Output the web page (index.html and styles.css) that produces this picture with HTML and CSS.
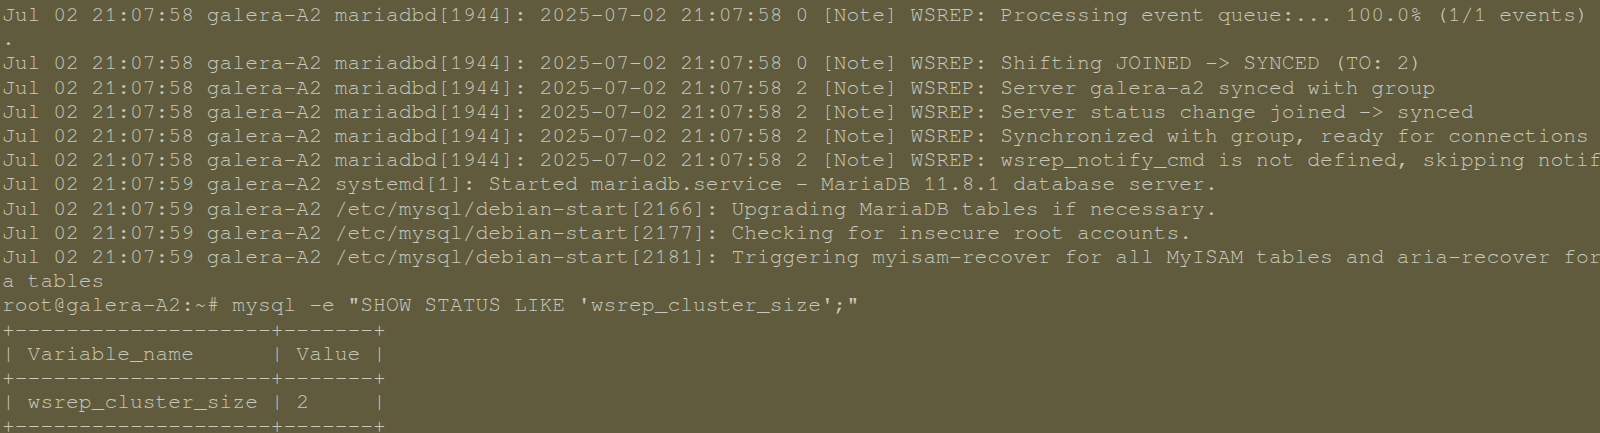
FILE: index.html
```html
<!DOCTYPE html>
<html lang="en">
<head>
<meta charset="utf-8">
<title>Terminal</title>
<link rel="stylesheet" href="styles.css">
</head>
<body>
<main class="terminal">
<pre class="output">Jul 02 21:07:58 galera-A2 mariadbd[1944]: 2025-07-02 21:07:58 0 [Note] WSREP: Processing event queue:... 100.0% (1/1 events) complete
.
Jul 02 21:07:58 galera-A2 mariadbd[1944]: 2025-07-02 21:07:58 0 [Note] WSREP: Shifting JOINED -&gt; SYNCED (TO: 2)
Jul 02 21:07:58 galera-A2 mariadbd[1944]: 2025-07-02 21:07:58 2 [Note] WSREP: Server galera-a2 synced with group
Jul 02 21:07:58 galera-A2 mariadbd[1944]: 2025-07-02 21:07:58 2 [Note] WSREP: Server status change joined -&gt; synced
Jul 02 21:07:58 galera-A2 mariadbd[1944]: 2025-07-02 21:07:58 2 [Note] WSREP: Synchronized with group, ready for connections
Jul 02 21:07:58 galera-A2 mariadbd[1944]: 2025-07-02 21:07:58 2 [Note] WSREP: wsrep_notify_cmd is not defined, skipping notification.
Jul 02 21:07:59 galera-A2 systemd[1]: Started mariadb.service - MariaDB 11.8.1 database server.
Jul 02 21:07:59 galera-A2 /etc/mysql/debian-start[2166]: Upgrading MariaDB tables if necessary.
Jul 02 21:07:59 galera-A2 /etc/mysql/debian-start[2177]: Checking for insecure root accounts.
Jul 02 21:07:59 galera-A2 /etc/mysql/debian-start[2181]: Triggering myisam-recover for all MyISAM tables and aria-recover for all Ari
a tables
root@galera-A2:~# mysql -e "SHOW STATUS LIKE 'wsrep_cluster_size';"
+--------------------+-------+
| Variable_name      | Value |
+--------------------+-------+
| wsrep_cluster_size | 2     |
+--------------------+-------+</pre>
</main>
</body>
</html>
```

FILE: styles.css
```css
html, body {
  margin: 0;
  padding: 0;
  background: #5f5b3c;
}

.terminal {
  width: 1600px;
  height: 433px;
  overflow: hidden;
  background: #5f5b3c;
}

.output {
  margin: 0;
  padding: 3px 0 0 2px;
  font-family: "Nimbus Mono PS", "Nimbus Mono L", "FreeMono", "Liberation Mono", monospace;
  font-size: 21.33px;
  line-height: 24.2px;
  color: #c8c8bc;
  white-space: pre;
}
```
